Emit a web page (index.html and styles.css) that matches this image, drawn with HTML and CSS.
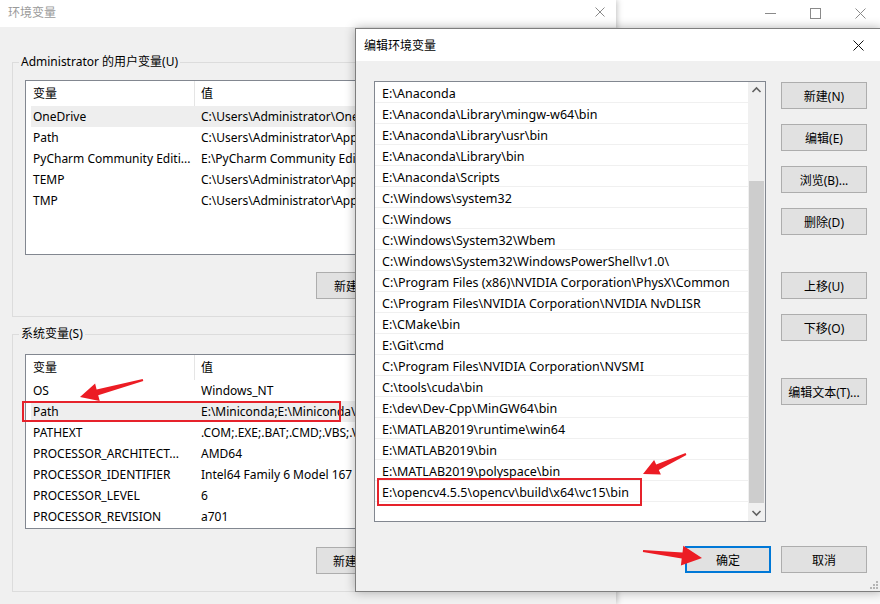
FILE: index.html
```html
<!DOCTYPE html>
<html lang="zh-CN">
<head>
    <meta charset="UTF-8">
    <title>编辑环境变量</title>
    <link rel="stylesheet" href="styles.css">
</head>
<body>
    <div class="desk">
        <div class="env-window">
            <div class="titlebar">
                <span class="title">环境变量</span>
                <svg class="close-x" width="10" height="10" viewBox="0 0 10 10"><path d="M0.5 0.5L9.5 9.5M9.5 0.5L0.5 9.5" stroke="#8a8a8a" stroke-width="1"/></svg>
            </div>
            <div class="env-body">
                <fieldset class="group">
                    <legend>Administrator 的用户变量(U)</legend>
                    <div class="varlist">
                        <div class="head"><span>变量</span><span>值</span></div>
                        <div class="row selected"><span>OneDrive</span><span>C:\Users\Administrator\OneDrive</span></div>
                        <div class="row"><span>Path</span><span>C:\Users\Administrator\AppData\Local\Microsoft\WindowsApps;</span></div>
                        <div class="row"><span>PyCharm Community Editi...</span><span>E:\PyCharm Community Edition 2021.3\bin;</span></div>
                        <div class="row"><span>TEMP</span><span>C:\Users\Administrator\AppData\Local\Temp</span></div>
                        <div class="row"><span>TMP</span><span>C:\Users\Administrator\AppData\Local\Temp</span></div>
                    </div>
                    <div class="btn-row">
                        <button class="btn">新建(N)...</button>
                        <button class="btn">编辑(E)...</button>
                        <button class="btn">删除(D)</button>
                    </div>
                </fieldset>

                <fieldset class="group group-sys">
                    <legend>系统变量(S)</legend>
                    <div class="varlist">
                        <div class="head"><span>变量</span><span>值</span></div>
                        <div class="row"><span>OS</span><span>Windows_NT</span></div>
                        <div class="row selected"><span>Path</span><span>E:\Miniconda;E:\Miniconda\Library\mingw-w64\bin;</span></div>
                        <div class="row"><span>PATHEXT</span><span>.COM;.EXE;.BAT;.CMD;.VBS;.VBE;.JS;.JSE;.WSF;.WSH;.MSC</span></div>
                        <div class="row"><span>PROCESSOR_ARCHITECT...</span><span>AMD64</span></div>
                        <div class="row"><span>PROCESSOR_IDENTIFIER</span><span>Intel64 Family 6 Model 167 Stepping 1, GenuineIntel</span></div>
                        <div class="row"><span>PROCESSOR_LEVEL</span><span>6</span></div>
                        <div class="row"><span>PROCESSOR_REVISION</span><span>a701</span></div>
                    </div>
                    <div class="btn-row">
                        <button class="btn">新建(W)...</button>
                        <button class="btn">编辑(I)...</button>
                        <button class="btn">删除(L)</button>
                    </div>
                </fieldset>
            </div>
        </div>

        <div class="other-window">
            <div class="other-titlebar">
                <div class="ctl"><svg width="11" height="11" viewBox="0 0 11 11"><path d="M0 5.5H11" stroke="#8a8a8a"/></svg></div>
                <div class="ctl"><svg width="11" height="11" viewBox="0 0 11 11"><rect x="0.5" y="0.5" width="10" height="10" fill="none" stroke="#8a8a8a"/></svg></div>
                <div class="ctl"><svg width="11" height="11" viewBox="0 0 11 11"><path d="M0.5 0.5L10.5 10.5M10.5 0.5L0.5 10.5" stroke="#8a8a8a"/></svg></div>
            </div>
        </div>
    </div>

    <div class="dialog">
        <div class="dlg-title">
            <span>编辑环境变量</span>
            <div class="dlg-close"><svg width="11" height="11" viewBox="0 0 11 11"><path d="M0.5 0.5L10.5 10.5M10.5 0.5L0.5 10.5" stroke="#111" stroke-width="1"/></svg></div>
        </div>
        <div class="dlg-body">
            <div class="dlg-main">
                <div class="pathlist">
                    <div class="items">
                        <div class="item">E:\Anaconda</div>
                        <div class="item">E:\Anaconda\Library\mingw-w64\bin</div>
                        <div class="item">E:\Anaconda\Library\usr\bin</div>
                        <div class="item">E:\Anaconda\Library\bin</div>
                        <div class="item">E:\Anaconda\Scripts</div>
                        <div class="item">C:\Windows\system32</div>
                        <div class="item">C:\Windows</div>
                        <div class="item">C:\Windows\System32\Wbem</div>
                        <div class="item">C:\Windows\System32\WindowsPowerShell\v1.0\</div>
                        <div class="item">C:\Program Files (x86)\NVIDIA Corporation\PhysX\Common</div>
                        <div class="item">C:\Program Files\NVIDIA Corporation\NVIDIA NvDLISR</div>
                        <div class="item">E:\CMake\bin</div>
                        <div class="item">E:\Git\cmd</div>
                        <div class="item">C:\Program Files\NVIDIA Corporation\NVSMI</div>
                        <div class="item">C:\tools\cuda\bin</div>
                        <div class="item">E:\dev\Dev-Cpp\MinGW64\bin</div>
                        <div class="item">E:\MATLAB2019\runtime\win64</div>
                        <div class="item">E:\MATLAB2019\bin</div>
                        <div class="item">E:\MATLAB2019\polyspace\bin</div>
                        <div class="item">E:\opencv4.5.5\opencv\build\x64\vc15\bin</div>
                        <div class="item"></div>
                    </div>
                    <div class="scrollbar">
                        <div class="arrow"><svg width="17" height="17" viewBox="0 0 17 17"><polyline points="4.5,10 8.5,6 12.5,10" fill="none" stroke="#606060" stroke-width="1.6"/></svg></div>
                        <div class="track"><div class="thumb"></div></div>
                        <div class="arrow"><svg width="17" height="17" viewBox="0 0 17 17"><polyline points="4.5,7 8.5,11 12.5,7" fill="none" stroke="#606060" stroke-width="1.6"/></svg></div>
                    </div>
                </div>
                <div class="side-buttons">
                    <button class="btn">新建(N)</button>
                    <button class="btn">编辑(E)</button>
                    <button class="btn">浏览(B)...</button>
                    <button class="btn">删除(D)</button>
                    <button class="btn spaced">上移(U)</button>
                    <button class="btn">下移(O)</button>
                    <button class="btn spaced">编辑文本(T)...</button>
                </div>
            </div>
            <div class="dlg-footer">
                <button class="btn btn-default">确定</button>
                <button class="btn">取消</button>
            </div>
        </div>
        <svg class="grip" width="8" height="8" viewBox="0 0 8 8">
            <rect x="6" y="0" width="2" height="2" fill="#b5b5b5"/>
            <rect x="3" y="3" width="2" height="2" fill="#b5b5b5"/>
            <rect x="6" y="3" width="2" height="2" fill="#b5b5b5"/>
            <rect x="0" y="6" width="2" height="2" fill="#b5b5b5"/>
            <rect x="3" y="6" width="2" height="2" fill="#b5b5b5"/>
            <rect x="6" y="6" width="2" height="2" fill="#b5b5b5"/>
        </svg>
    </div>

    <!-- red annotations drawn over the screenshot -->
    <svg class="marks" width="880" height="604" viewBox="0 0 880 604">
        <rect x="23" y="402" width="317" height="19" fill="none" stroke="#e6222b" stroke-width="2"/>
        <rect x="378" y="479" width="263" height="26" fill="none" stroke="#e6222b" stroke-width="2"/>
        <polygon points="142.7,379 96.6,389.4 95.1,383.6 80,397 99.7,401 98.2,395.2 143.3,381" fill="#ec1c24"/>
        <polygon points="685.6,453.1 656.2,464.5 654.1,460 643,474 660.9,474.5 658.8,470 686.4,454.9" fill="#ec1c24"/>
        <polygon points="643.1,550 682.5,552.6 683.3,545.7 702,558 680.9,565.5 681.7,558.6 642.9,552" fill="#ec1c24"/>
    </svg>
</body>
</html>
```

FILE: styles.css
```css
* {
    box-sizing: border-box;
}

body {
    margin: 0;
    width: 880px;
    height: 604px;
    overflow: hidden;
    position: relative;
    background-color: #f7f7f7;
    font-family: "Noto Sans", "Noto Sans CJK SC", sans-serif;
    font-size: 12px;
    color: #000;
}

.desk {
    display: flex;
    height: 604px;
}

/* background window: 环境变量 */
.env-window {
    width: 616px;
    flex: none;
    display: flex;
    flex-direction: column;
    background-color: #f0f0f0;
    box-shadow: 1px 0 6px rgba(0, 0, 0, 0.25);
    position: relative;
    z-index: 1;
}

.titlebar {
    height: 27px;
    background-color: #fff;
    display: flex;
    align-items: center;
    justify-content: space-between;
    padding: 0 11px 3px 8px;
}

    .titlebar .title {
        color: #9a9a9a;
    }

.env-body {
    padding: 27px 11px 0 12px;
}

.group {
    margin: 0;
    border: 1px solid #dcdcdc;
    padding: 0 12px 17px 12px;
    min-width: 0;
}

    .group legend {
        padding: 0 2px;
        margin-left: -6px;
        line-height: 16px;
    }

.group-sys {
    margin-top: 9px;
}

.varlist {
    margin-top: 10px;
    height: 175px;
    background-color: #fff;
    border: 1px solid #828790;
    overflow: hidden;
    white-space: nowrap;
}

.group-sys .varlist {
    margin-top: 12px;
}

.head {
    display: grid;
    grid-template-columns: 168px 1fr;
    height: 25px;
    line-height: 25px;
}

    .head span {
        padding-left: 7px;
    }

        .head span + span {
            border-left: 1px solid #e5e5e5;
            padding-left: 6px;
        }

.row {
    display: grid;
    grid-template-columns: 163px 1fr;
    height: 21px;
    line-height: 21px;
    margin-left: 5px;
    overflow: hidden;
}

    .row span:first-child {
        padding-left: 2px;
    }

    .row span + span {
        padding-left: 7px;
    }

    .row.selected {
        background-color: #eeeeee;
    }

.btn-row {
    display: flex;
    justify-content: flex-end;
    gap: 9px;
    margin-top: 17px;
}

.group-sys .btn-row {
    margin-top: 18px;
}

.btn {
    width: 86px;
    height: 27px;
    padding: 0;
    background-color: #e1e1e1;
    border: 1px solid #adadad;
    font: inherit;
    color: #000;
    white-space: nowrap;
}

/* window behind on the right */
.other-window {
    flex: 1;
    background-color: #f9f9f9;
}

.other-titlebar {
    height: 30px;
    background-color: #fff;
    border-bottom: 1px solid #d4d4d4;
    display: flex;
    justify-content: flex-end;
    margin-right: -3px;
}

.ctl {
    width: 45px;
    height: 27px;
    display: flex;
    align-items: center;
    justify-content: center;
}

/* front dialog: 编辑环境变量 */
.dialog {
    position: absolute;
    left: 355px;
    top: 28px;
    width: 527px;
    height: 564px;
    background-color: #f0f0f0;
    border: 1px solid #7e7e7e;
    box-shadow: 0 0 10px rgba(0, 0, 0, 0.3);
    z-index: 2;
}

.dlg-title {
    height: 32px;
    background-color: #fff;
    display: flex;
    align-items: center;
    justify-content: space-between;
    padding-left: 8px;
}

.dlg-close {
    width: 46px;
    height: 32px;
    display: flex;
    align-items: center;
    justify-content: center;
}

.dlg-body {
    padding: 20px 14px 0 18px;
}

.dlg-main {
    display: flex;
    gap: 15px;
}

.pathlist {
    width: 392px;
    height: 441px;
    flex: none;
    display: flex;
    background-color: #fff;
    border: 1px solid #828790;
    overflow: hidden;
}

.items {
    flex: 1;
    min-width: 0;
    overflow: hidden;
}

.item {
    height: 21px;
    padding-top: 3px;
    line-height: 17px;
    padding-left: 7px;
    border-bottom: 1px solid #f0f0f0;
    font-size: 12.5px;
    white-space: nowrap;
}

.scrollbar {
    width: 17px;
    flex: none;
    display: flex;
    flex-direction: column;
    background-color: #f0f0f0;
}

    .scrollbar .arrow {
        height: 17px;
    }

        .scrollbar .arrow svg {
            display: block;
        }

    .scrollbar .track {
        flex: 1;
    }

    .scrollbar .thumb {
        margin: 82px 1px 0 1px;
        height: 322px;
        background-color: #cdcdcd;
    }

.side-buttons {
    display: flex;
    flex-direction: column;
    gap: 15px;
    padding-top: 1px;
}

    .side-buttons .spaced {
        margin-top: 22px;
    }

.dlg-footer {
    display: flex;
    justify-content: flex-end;
    gap: 10px;
    margin-top: 24px;
}

.btn-default {
    border: 2px solid #0078d7;
}

.grip {
    position: absolute;
    right: 3px;
    bottom: 2px;
}

.marks {
    position: absolute;
    left: 0;
    top: 0;
    z-index: 3;
    pointer-events: none;
}
```
